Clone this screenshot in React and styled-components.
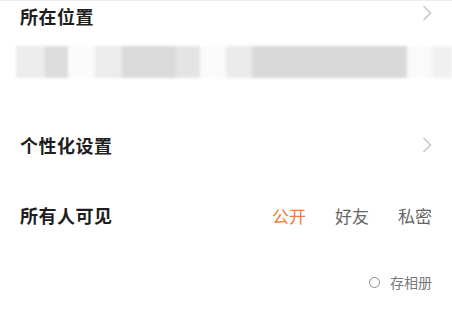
import React from 'react'
import styled, { createGlobalStyle } from 'styled-components'

const GlobalStyle = createGlobalStyle`
    html, body {
        margin: 0;
        padding: 0;
        background: #fff;
    }
    body {
        font-family: "Noto Sans CJK SC", "Noto Sans", sans-serif;
    }
`

const Page = styled.div`
    width: 452px;
    height: 312px;
    overflow: hidden;
    border-top: 1px solid #eeeeee;
    box-sizing: border-box;
    background: #fff;
`

const Row = styled.div`
    display: flex;
    align-items: center;
    justify-content: space-between;
    height: ${props => props.height}px;
    margin-top: ${props => props.offset || 0}px;
    padding: 0 20px;
    box-sizing: border-box;
`

const Title = styled.span`
    font-size: 18px;
    font-weight: 700;
    color: #1e1e1e;
    letter-spacing: 0.5px;
    line-height: 1;
`

const Chevron = styled.svg`
    width: 10px;
    height: 16px;
    margin-top: ${props => props.shift || 0}px;
    fill: none;
    stroke: #c4c4c4;
    stroke-width: 1.4;
`

const Strip = styled.div`
    display: flex;
    height: 32px;
    margin-top: 15px;
    padding-left: 16px;
    filter: blur(1.5px);
`

const Block = styled.div`
    width: ${props => props.w}px;
    background: ${props => props.color};
    flex: 0 0 auto;
`

const Options = styled.div`
    display: flex;
    gap: 29px;
`

const Option = styled.span`
    font-size: 17px;
    line-height: 1;
    color: ${props => props.active ? '#f07c3c' : '#666'};
`

const SaveRow = styled.div`
    display: flex;
    align-items: center;
    justify-content: flex-end;
    gap: 10px;
    height: 64px;
    padding: 0 20px;
`

const Radio = styled.span`
    width: 9px;
    height: 9px;
    border: 1.5px solid #8a8a8a;
    border-radius: 50%;
`

const SaveLabel = styled.span`
    font-size: 14px;
    line-height: 1;
    color: #777;
`

const blocks = [
    [29, '#ececec'],
    [23, '#dcdcdc'],
    [27, '#fbfbfb'],
    [27, '#ececec'],
    [54, '#dadada'],
    [24, '#e4e4e4'],
    [26, '#fafafa'],
    [26, '#ebebeb'],
    [155, '#d9d9d9'],
    [25, '#fafafa'],
    [20, '#f0f0f0'],
]

const Arrow = ({ shift }) => (
    <Chevron viewBox="0 0 10 16" shift={shift}>
        <path d="M1.5 1 L8.5 8 L1.5 15" />
    </Chevron>
)

export default function App() {
    return (
        <Page>
            <GlobalStyle />
            <Row height={30}>
                <Title>所在位置</Title>
                <Arrow shift={-6} />
            </Row>
            <Strip>
                {blocks.map(([w, color], i) => <Block key={i} w={w} color={color} />)}
            </Strip>
            <Row height={70} offset={32}>
                <Title>个性化设置</Title>
                <Arrow />
            </Row>
            <Row height={70}>
                <Title>所有人可见</Title>
                <Options>
                    <Option active>公开</Option>
                    <Option>好友</Option>
                    <Option>私密</Option>
                </Options>
            </Row>
            <SaveRow>
                <Radio />
                <SaveLabel>存相册</SaveLabel>
            </SaveRow>
        </Page>
    )
}
